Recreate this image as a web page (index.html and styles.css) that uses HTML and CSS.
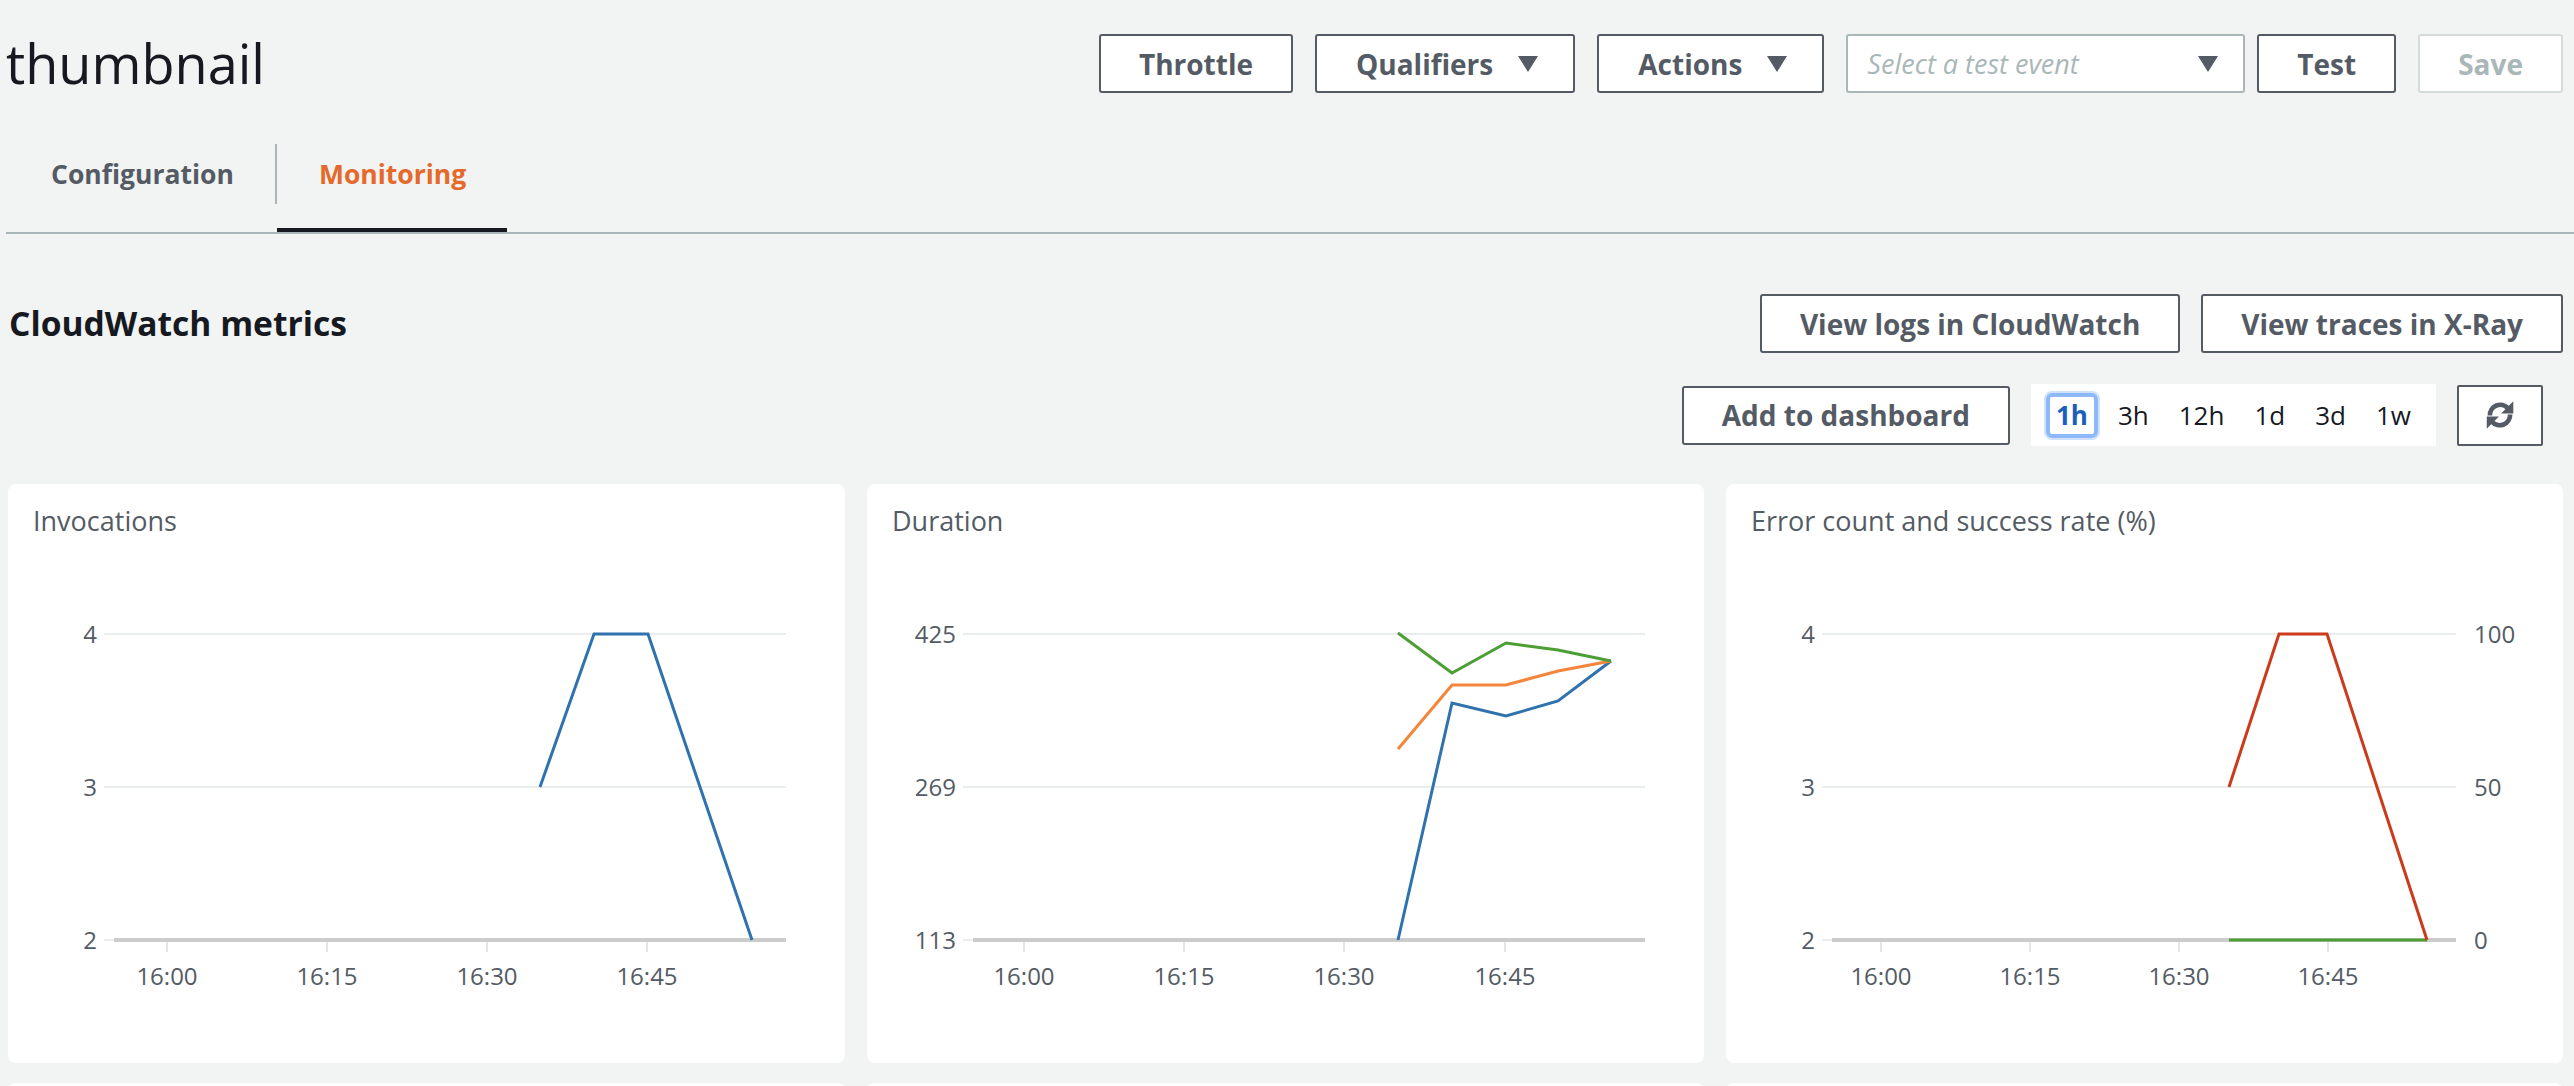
FILE: index.html
```html
<!DOCTYPE html>
<html lang="en">
<head>
<meta charset="utf-8">
<title>thumbnail - Lambda</title>
<link rel="stylesheet" href="styles.css">
</head>
<body>
<div class="page">
  <header class="top">
    <h1 class="fn-name">thumbnail</h1>
    <div class="actions">
      <button class="btn">Throttle</button>
      <button class="btn btn-dd">Qualifiers<span class="caret"></span></button>
      <button class="btn btn-dd">Actions<span class="caret"></span></button>
      <div class="select"><span class="placeholder">Select a test event</span><span class="caret"></span></div>
      <button class="btn btn-test">Test</button>
      <button class="btn btn-disabled">Save</button>
    </div>
  </header>

  <nav class="tabs">
    <div class="tab tab-first">Configuration</div>
    <div class="tab-sep"></div>
    <div class="tab active">Monitoring</div>
  </nav>

  <section class="metrics">
    <div class="metrics-head">
      <h2 class="metrics-title">CloudWatch metrics</h2>
      <div class="btn-group">
        <button class="btn">View logs in CloudWatch</button>
        <button class="btn">View traces in X-Ray</button>
      </div>
    </div>

    <div class="toolbar">
      <button class="btn">Add to dashboard</button>
      <div class="ranges">
        <span class="range selected">1h</span>
        <span class="range">3h</span>
        <span class="range">12h</span>
        <span class="range">1d</span>
        <span class="range">3d</span>
        <span class="range">1w</span>
      </div>
      <button class="btn-icon" aria-label="Refresh">
        <svg width="36" height="34" viewBox="0 0 32 32">
          <path d="M6.5 16.5 A9.8 9.8 0 0 1 23.5 9.5" fill="none" stroke="#545b64" stroke-width="4.4"/>
          <polygon points="28.5,3 28.5,14.5 17,14.5" fill="#545b64"/>
          <path d="M25.5 15.5 A9.8 9.8 0 0 1 8.5 22.5" fill="none" stroke="#545b64" stroke-width="4.4"/>
          <polygon points="3.5,29 3.5,17.5 15,17.5" fill="#545b64"/>
        </svg>
      </button>
    </div>

    <div class="cards">
      <div class="card">
        <div class="card-title">Invocations</div>
        <svg class="chart" width="837" height="526" viewBox="0 0 837 526">
          <g class="grid">
            <line x1="96" y1="97" x2="778" y2="97"/>
            <line x1="96" y1="250" x2="778" y2="250"/>
            <line x1="96" y1="403" x2="778" y2="403"/>
          </g>
          <line class="domain" x1="106" y1="403" x2="778" y2="403"/>
          <g class="ticks">
            <line x1="159" y1="405" x2="159" y2="415"/>
            <line x1="319" y1="405" x2="319" y2="415"/>
            <line x1="479" y1="405" x2="479" y2="415"/>
            <line x1="639" y1="405" x2="639" y2="415"/>
          </g>
          <g class="axis-label end">
            <text x="89" y="105.5">4</text>
            <text x="89" y="258.5">3</text>
            <text x="89" y="411.5">2</text>
          </g>
          <g class="axis-label mid">
            <text x="159" y="448">16:00</text>
            <text x="319" y="448">16:15</text>
            <text x="479" y="448">16:30</text>
            <text x="639" y="448">16:45</text>
          </g>
          <polyline class="series blue" points="532,250 586,97 640,97 744,403"/>
        </svg>
      </div>

      <div class="card">
        <div class="card-title">Duration</div>
        <svg class="chart" width="837" height="526" viewBox="0 0 837 526">
          <g class="grid">
            <line x1="96" y1="97" x2="778" y2="97"/>
            <line x1="96" y1="250" x2="778" y2="250"/>
            <line x1="96" y1="403" x2="778" y2="403"/>
          </g>
          <line class="domain" x1="106" y1="403" x2="778" y2="403"/>
          <g class="ticks">
            <line x1="157" y1="405" x2="157" y2="415"/>
            <line x1="317" y1="405" x2="317" y2="415"/>
            <line x1="477" y1="405" x2="477" y2="415"/>
            <line x1="638" y1="405" x2="638" y2="415"/>
          </g>
          <g class="axis-label end">
            <text x="89" y="105.5">425</text>
            <text x="89" y="258.5">269</text>
            <text x="89" y="411.5">113</text>
          </g>
          <g class="axis-label mid">
            <text x="157" y="448">16:00</text>
            <text x="317" y="448">16:15</text>
            <text x="477" y="448">16:30</text>
            <text x="638" y="448">16:45</text>
          </g>
          <polyline class="series blue" points="531,403 585,166 639,179 691,164 744,124"/>
          <polyline class="series orange" points="531,212 585,148 639,148 691,134 744,124"/>
          <polyline class="series green" points="531,96 585,136 639,106 691,113 744,124"/>
        </svg>
      </div>

      <div class="card">
        <div class="card-title">Error count and success rate (%)</div>
        <svg class="chart" width="837" height="526" viewBox="0 0 837 526">
          <g class="grid">
            <line x1="96" y1="97" x2="730" y2="97"/>
            <line x1="96" y1="250" x2="730" y2="250"/>
            <line x1="96" y1="403" x2="730" y2="403"/>
          </g>
          <line class="domain" x1="106" y1="403" x2="730" y2="403"/>
          <g class="ticks">
            <line x1="155" y1="405" x2="155" y2="415"/>
            <line x1="304" y1="405" x2="304" y2="415"/>
            <line x1="453" y1="405" x2="453" y2="415"/>
            <line x1="602" y1="405" x2="602" y2="415"/>
          </g>
          <g class="axis-label end">
            <text x="89" y="105.5">4</text>
            <text x="89" y="258.5">3</text>
            <text x="89" y="411.5">2</text>
          </g>
          <g class="axis-label">
            <text x="748" y="105.5">100</text>
            <text x="748" y="258.5">50</text>
            <text x="748" y="411.5">0</text>
          </g>
          <g class="axis-label mid">
            <text x="155" y="448">16:00</text>
            <text x="304" y="448">16:15</text>
            <text x="453" y="448">16:30</text>
            <text x="602" y="448">16:45</text>
          </g>
          <polyline class="series green" points="503,403 701,403"/>
          <polyline class="series red" points="503,250 553,97 601,97 701,403"/>
        </svg>
      </div>

      <div class="card card-more"></div>
      <div class="card card-more"></div>
      <div class="card card-more"></div>
    </div>
  </section>
</div>
</body>
</html>
```

FILE: styles.css
```css
html, body {
  margin: 0;
  padding: 0;
}

body {
  background: #f2f3f3;
  font-family: "Open Sans", "Noto Sans", sans-serif;
  color: #16191f;
  height: 1086px;
  overflow: hidden;
}

.page {
  padding: 0 11px 0 6px;
}

/* ---------- header ---------- */
.top {
  display: flex;
  justify-content: space-between;
  align-items: flex-start;
  padding-top: 34px;
}

.fn-name {
  margin: 0;
  font-size: 54px;
  font-weight: 400;
  line-height: 59px;
  color: #16191f;
}

.actions {
  display: flex;
  align-items: center;
  gap: 22px;
}

.btn {
  box-sizing: border-box;
  height: 59px;
  display: inline-flex;
  align-items: center;
  justify-content: center;
  padding: 0 38px;
  background: #fff;
  border: 2px solid #545b64;
  border-radius: 3px;
  font-family: "Open Sans", "Noto Sans", sans-serif;
  font-size: 28px;
  font-weight: 700;
  line-height: 1;
  color: #545b64;
  white-space: nowrap;
}

.btn-dd {
  padding: 0 35px 0 39px;
}

.caret {
  display: inline-block;
  width: 0;
  height: 0;
  margin-left: 25px;
  border-left: 10px solid transparent;
  border-right: 10px solid transparent;
  border-top: 16px solid #545b64;
}

.select {
  box-sizing: border-box;
  width: 399px;
  height: 59px;
  display: flex;
  align-items: center;
  justify-content: space-between;
  padding: 0 25px 0 19px;
  background: #fff;
  border: 2px solid #aab7b8;
  border-radius: 3px;
}

.placeholder {
  font-size: 27px;
  font-style: italic;
  color: #aab7b8;
  white-space: nowrap;
}

.btn-test {
  margin-left: -10px;
}

.btn-disabled {
  border-color: #d5dbdb;
  color: #aab7b8;
}

/* ---------- tabs ---------- */
.tabs {
  display: flex;
  align-items: flex-start;
  margin: 51px -11px 0 0;
  border-bottom: 2px solid #aab7b8;
}

.tab {
  box-sizing: border-box;
  height: 88px;
  padding: 11px 41px 0 42px;
  font-size: 26.5px;
  font-weight: 700;
  line-height: 38px;
  color: #545b64;
  border-bottom: 4px solid transparent;
}

.tab-first {
  padding-left: 45px;
}

.tab.active {
  color: #e4692a;
  border-bottom-color: #16191f;
}

.tab-sep {
  width: 2px;
  height: 60px;
  background: #aab7b8;
}

/* ---------- metrics ---------- */
.metrics {
  margin-top: 60px;
}

.metrics-head {
  display: flex;
  justify-content: space-between;
  align-items: center;
}

.metrics-title {
  margin: 0 0 0 3px;
  font-size: 33.6px;
  font-weight: 700;
  line-height: 59px;
  color: #16191f;
}

.btn-group {
  display: flex;
  gap: 21px;
}

.toolbar {
  display: flex;
  justify-content: flex-end;
  align-items: center;
  gap: 21px;
  margin: 31px 20px 0 0;
}

.ranges {
  box-sizing: border-box;
  height: 62px;
  display: flex;
  align-items: center;
  gap: 10px;
  padding: 0 15px;
  background: #fff;
}

.range {
  box-sizing: border-box;
  height: 45px;
  display: inline-flex;
  align-items: center;
  padding: 0 7px;
  border: 3px solid transparent;
  border-radius: 6px;
  font-size: 26px;
  color: #16191f;
}

.range.selected {
  border: 4px solid #8db9f8;
  padding: 0 6px;
  box-shadow: 0 0 0 2px #cfe1fc;
  font-weight: 700;
  color: #1b5fbb;
}

.btn-icon {
  box-sizing: border-box;
  width: 86px;
  height: 61px;
  display: inline-flex;
  align-items: center;
  justify-content: center;
  padding: 0;
  background: #fff;
  border: 2px solid #545b64;
  border-radius: 2px;
}

/* ---------- cards ---------- */
.cards {
  display: grid;
  grid-template-columns: repeat(3, 1fr);
  gap: 20px 22px;
  margin: 38px 0 0 2px;
}

.card {
  background: #fff;
  border-radius: 8px;
  padding-top: 21px;
  height: 579px;
  box-sizing: border-box;
  overflow: hidden;
}

.card-title {
  padding-left: 25px;
  font-size: 27px;
  line-height: 32px;
  color: #545b64;
}

.chart {
  display: block;
}

.grid line {
  stroke: #eaeded;
  stroke-width: 2;
}

.domain {
  stroke: #cccccc;
  stroke-width: 4;
}

.ticks line {
  stroke: #e6e6e6;
  stroke-width: 2;
}

.axis-label text {
  font-family: "Open Sans", "Noto Sans", sans-serif;
  font-size: 24px;
  fill: #545b64;
}

.axis-label.end text {
  text-anchor: end;
}

.axis-label.mid text {
  text-anchor: middle;
}

.series {
  fill: none;
  stroke-width: 3;
  stroke-linejoin: miter;
}

.series.blue { stroke: #2f72ad; }
.series.orange { stroke: #f5853a; }
.series.green { stroke: #4c9e35; }
.series.red { stroke: #cc3a1c; }
```
